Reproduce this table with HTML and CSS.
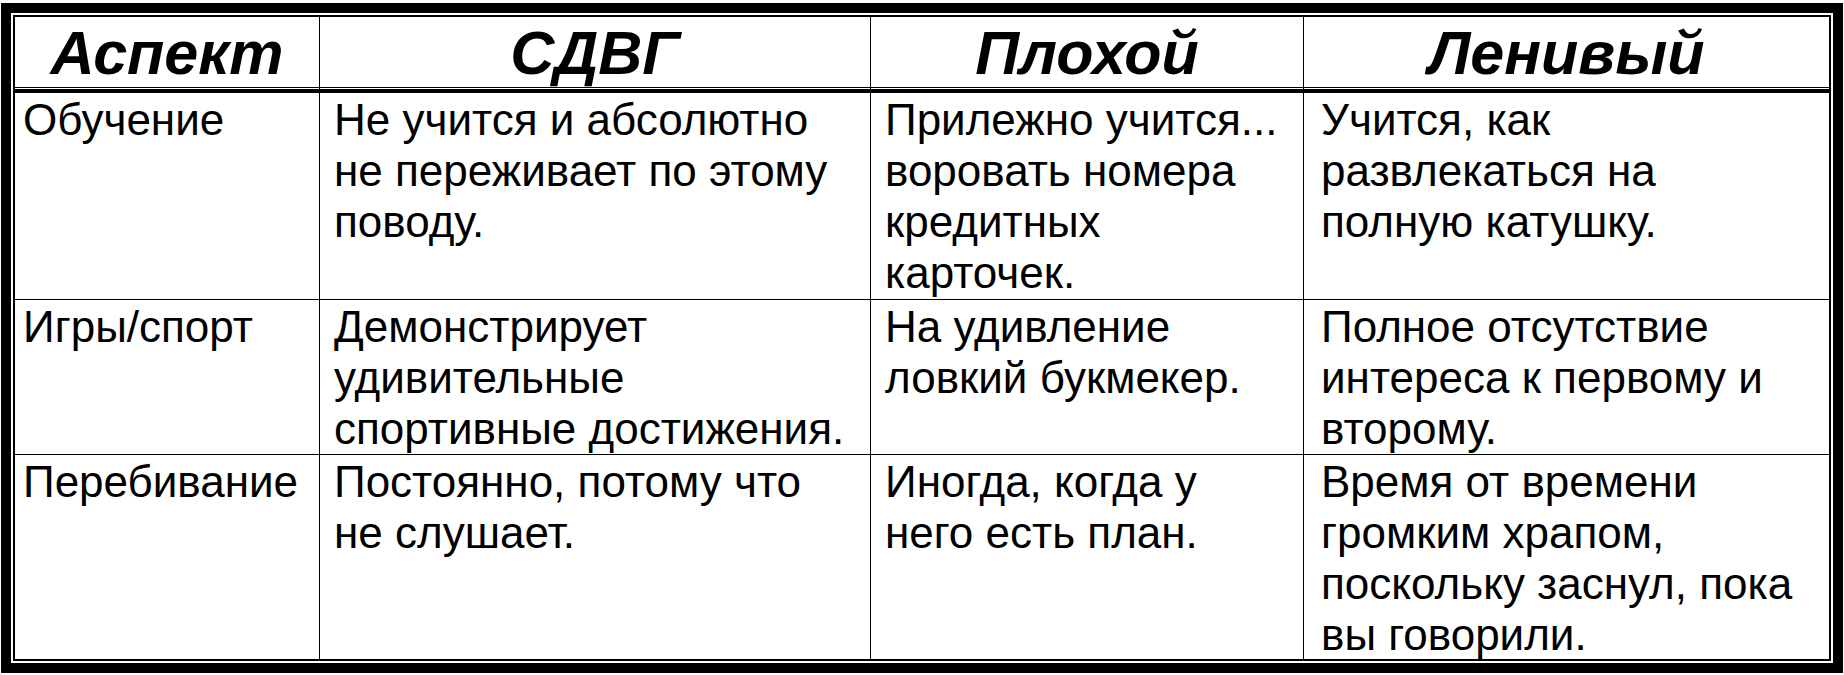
FILE: index.html
```html
<!DOCTYPE html>
<html lang="ru">
<head>
<meta charset="utf-8">
<title>Аспект</title>
<link rel="stylesheet" href="styles.css">
</head>
<body>
<div class="frame">
  <div class="grid">
    <div class="cell head">Аспект</div>
    <div class="cell head">СДВГ</div>
    <div class="cell head">Плохой</div>
    <div class="cell head">Ленивый</div>

    <div class="cell first">Обучение</div>
    <div class="cell">Не учится и абсолютно не переживает по этому поводу.</div>
    <div class="cell">Прилежно учится... воровать номера кредитных карточек.</div>
    <div class="cell last">Учится, как развлекаться на полную катушку.</div>

    <div class="cell first">Игры/спорт</div>
    <div class="cell">Демонстрирует удивительные спортивные достижения.</div>
    <div class="cell">На удивление ловкий букмекер.</div>
    <div class="cell last">Полное отсутствие интереса к первому и второму.</div>

    <div class="cell first">Перебивание</div>
    <div class="cell">Постоянно, потому что не слушает.</div>
    <div class="cell">Иногда, когда у него есть план.</div>
    <div class="cell last">Время от времени громким храпом, поскольку заснул, пока вы говорили.</div>
  </div>
</div>
</body>
</html>
```
FILE: styles.css
```css
html, body {
  margin: 0;
  padding: 0;
  background: #fff;
}

.frame {
  box-sizing: border-box;
  margin: 3px 0 0 1px;
  width: 1842px;
  height: 670px;
  border: 10px solid #000;
  padding: 2px;
  background: #fff;
}

.grid {
  display: grid;
  grid-template-columns: 304px 550px 432px 525px;
  grid-template-rows: 75px 206px 154px 204px;
  gap: 1px;
  background: #000;
  border: 2px solid #000;
  font-family: "Liberation Sans", Arial, sans-serif;
  color: #000;
}

.cell {
  background: #fff;
  font-size: 44px;
  line-height: 51px;
  padding: 1px 10px 0 14px;
  overflow: hidden;
}

.cell.first {
  padding-left: 8px;
}

.cell.last {
  padding-left: 17px;
}

.cell.head {
  height: 72px;
  margin-bottom: 3px;
  box-sizing: border-box;
  padding: 2px 0 0 0;
  font-size: 61px;
  line-height: 68px;
  font-weight: bold;
  font-style: italic;
  text-align: center;
  box-shadow: inset 0 -1px 0 #fff, inset 0 -2px 0 #000;
}
```
